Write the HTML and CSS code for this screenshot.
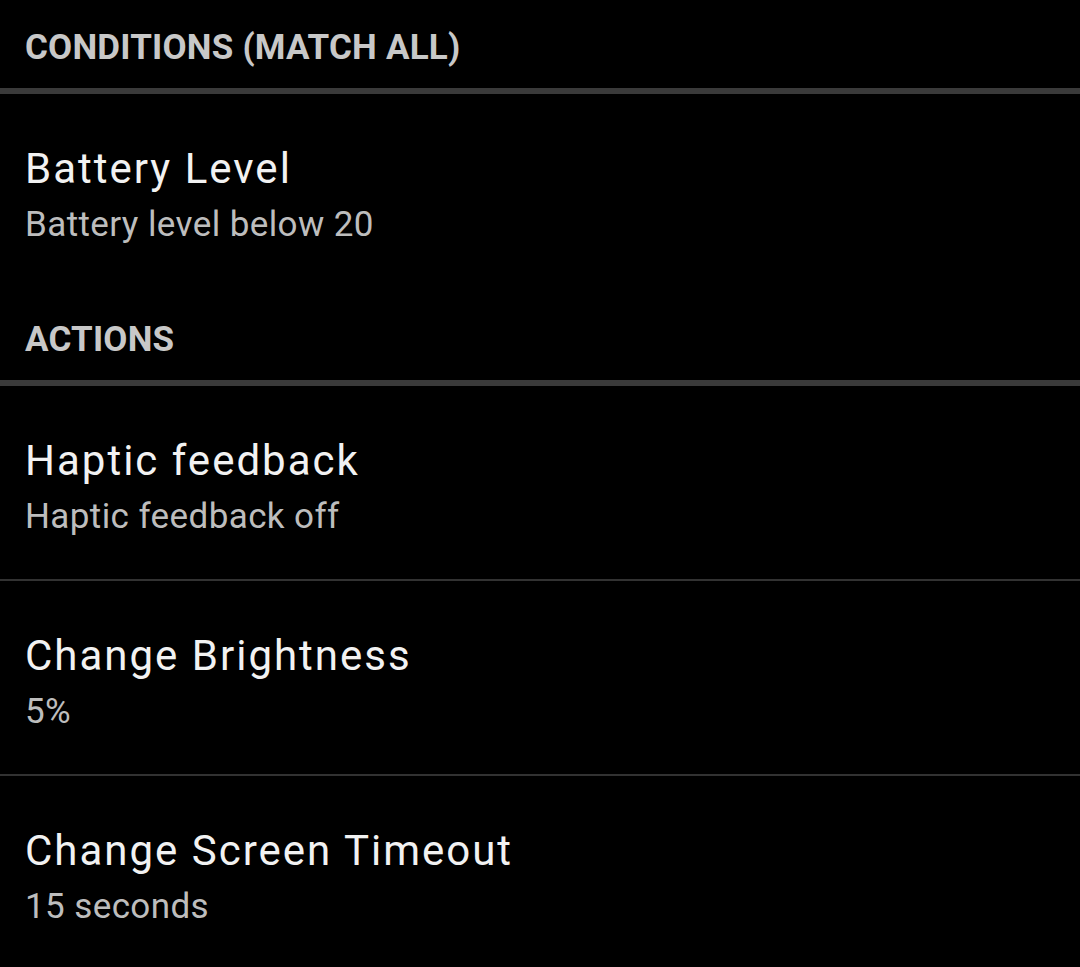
FILE: index.html
```html
<!DOCTYPE html>
<html>
<head>
<meta charset="utf-8">
<link rel="stylesheet" href="styles.css">
</head>
<body>
<div class="list">
  <div class="header header-first">CONDITIONS (MATCH ALL)</div>
  <div class="item">
    <div class="title">Battery Level</div>
    <div class="summary">Battery level below 20</div>
  </div>
  <div class="header">ACTIONS</div>
  <div class="item item-divided">
    <div class="title">Haptic feedback</div>
    <div class="summary">Haptic feedback off</div>
  </div>
  <div class="item item-divided">
    <div class="title">Change Brightness</div>
    <div class="summary">5%</div>
  </div>
  <div class="item">
    <div class="title">Change Screen Timeout</div>
    <div class="summary">15 seconds</div>
  </div>
</div>
</body>
</html>
```
FILE: styles.css
```css
html, body {
  margin: 0;
  padding: 0;
  background: #000;
}
body {
  width: 1080px;
  height: 967px;
  overflow: hidden;
  font-family: Roboto, "Liberation Sans", sans-serif;
}
.list {
  display: flex;
  flex-direction: column;
}
.header {
  padding: 31px 25px 18px;
  font-size: 35px;
  line-height: 44px;
  font-weight: bold;
  letter-spacing: 0.2px;
  color: #c8c8c8;
  border-bottom: 6px solid #3a3a3a;
}
.header-first {
  padding-top: 26px;
}
.item {
  padding: 46px 25px 35px;
  height: 112px;
}
.item-divided {
  border-bottom: 2px solid #323232;
}
.title {
  font-size: 42px;
  line-height: 58px;
  letter-spacing: 2px;
  color: #f2f2f2;
}
.summary {
  font-size: 35px;
  line-height: 54px;
  letter-spacing: 0.4px;
  color: #bdbdbd;
}
```
